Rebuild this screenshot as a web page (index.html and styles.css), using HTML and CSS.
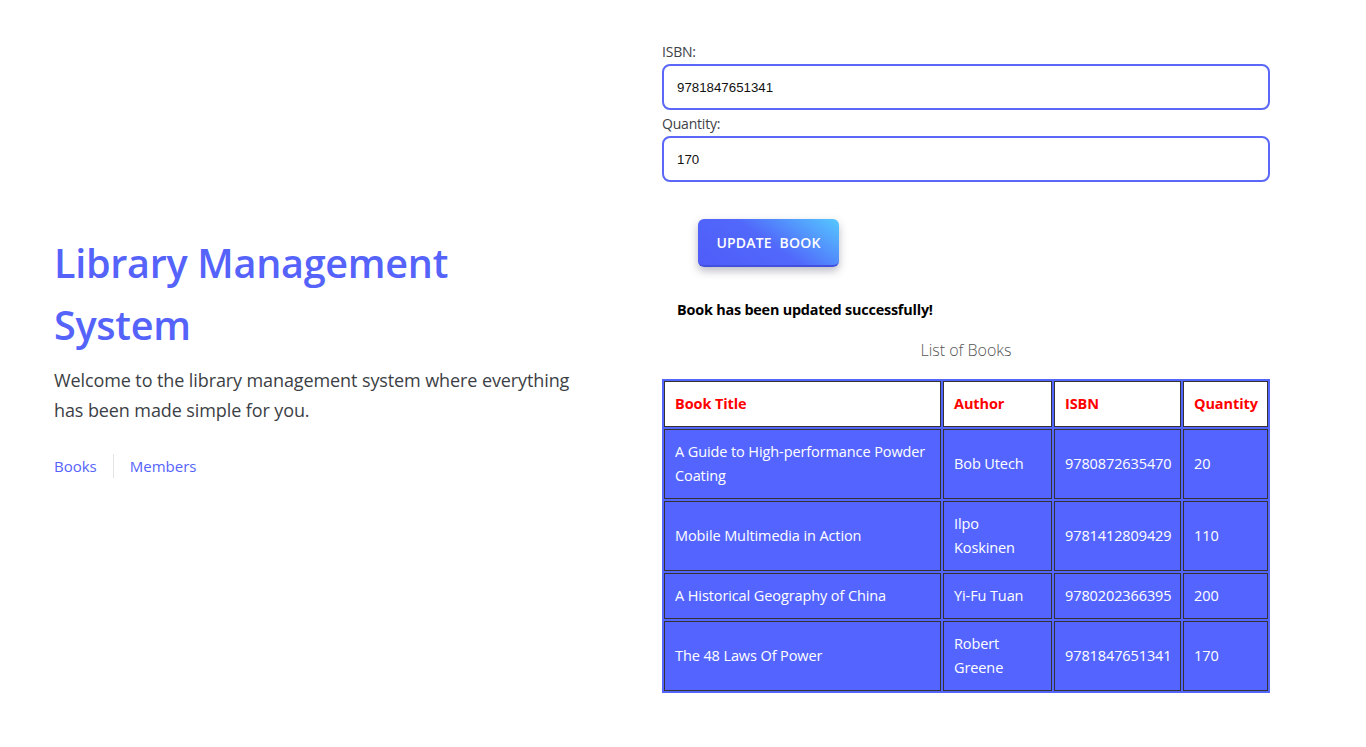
FILE: index.html
```html
<!DOCTYPE html>
<html lang="en">
<head>
<meta charset="utf-8">
<title>Library Management System</title>
<link rel="stylesheet" href="styles.css">
</head>
<body>
<main class="page">
  <section class="intro">
    <h1 class="title">Library Management System</h1>
    <p class="lead">Welcome to the library management system where everything has been made simple for you.</p>
    <nav class="links">
      <a href="#" class="link">Books</a>
      <span class="sep"></span>
      <a href="#" class="link">Members</a>
    </nav>
  </section>
  <section class="panel">
    <form class="form">
      <label class="label" for="isbn">ISBN:</label>
      <input class="input" id="isbn" type="text" value="9781847651341">
      <label class="label" for="qty">Quantity:</label>
      <input class="input" id="qty" type="text" value="170">
      <button type="button" class="btn">Update&nbsp; Book</button>
    </form>
    <p class="msg">Book has been updated successfully!</p>
    <h2 class="list-title">List of Books</h2>
    <table class="books">
      <thead>
        <tr>
          <th class="c1">Book Title</th>
          <th class="c2">Author</th>
          <th class="c3">ISBN</th>
          <th class="c4">Quantity</th>
        </tr>
      </thead>
      <tbody>
        <tr><td>A Guide to High-performance Powder Coating</td><td>Bob Utech</td><td>9780872635470</td><td>20</td></tr>
        <tr><td>Mobile Multimedia in Action</td><td>Ilpo Koskinen</td><td>9781412809429</td><td>110</td></tr>
        <tr><td>A Historical Geography of China</td><td>Yi-Fu Tuan</td><td>9780202366395</td><td>200</td></tr>
        <tr><td>The 48 Laws Of Power</td><td>Robert Greene</td><td>9781847651341</td><td>170</td></tr>
      </tbody>
    </table>
  </section>
</main>
</body>
</html>
```

FILE: styles.css
```css
* { box-sizing: border-box; }
html, body { margin: 0; padding: 0; background: #fff; }
body {
  font-family: "Open Sans", "Noto Sans", "Liberation Sans", sans-serif;
  color: #333;
}
.page {
  display: grid;
  grid-template-columns: 608px 608px;
  padding-left: 54px;
  align-items: start;
}
.intro {
  padding-top: 232px;
  padding-right: 68px;
}
.title {
  margin: 0;
  font-size: 39.6px;
  line-height: 62px;
  font-weight: 600;
  color: #5563fb;
  letter-spacing: -0.3px;
}
.lead {
  margin: 9px 0 0;
  font-size: 18px;
  line-height: 30px;
  color: #3c3f45;
  letter-spacing: -0.1px;
}
.links {
  margin-top: 29px;
  display: flex;
  align-items: center;
}
.link {
  font-size: 15px;
  line-height: 24px;
  color: #5563fb;
  text-decoration: none;
}
.sep {
  width: 1px;
  height: 24px;
  background: #e4e4e8;
  margin: 0 16px;
}
.panel {
  padding-top: 42px;
}
.form {
  display: flex;
  flex-direction: column;
  align-items: flex-start;
}
.label {
  font-size: 14px;
  line-height: 20px;
  color: #3e4148;
  margin-bottom: 2px;
  letter-spacing: -0.2px;
}
.input {
  width: 608px;
  height: 46px;
  border: 2px solid #5a67f7;
  border-radius: 8px;
  padding: 0 13px;
  font-family: "Liberation Sans", Arial, sans-serif;
  font-size: 13.3px;
  color: #111;
  margin-bottom: 4px;
  outline: none;
}
.btn {
  margin: 33px 0 0 36px;
  width: 141px;
  height: 48px;
  border: none;
  border-bottom: 2px solid #434fdd;
  border-radius: 6px;
  background: linear-gradient(35deg, #4f5cf9 0%, #5168fb 50%, #55c8ff 100%);
  color: #fff;
  font-family: "Open Sans", "Noto Sans", sans-serif;
  font-weight: 600;
  font-size: 14px;
  text-transform: uppercase;
  letter-spacing: 0.2px;
  box-shadow: 0 4px 8px rgba(60, 60, 90, 0.35);
  cursor: pointer;
}
.msg {
  margin: 33px 0 0;
  padding-left: 15px;
  font-size: 14.4px;
  line-height: 20px;
  font-weight: 700;
  color: #000;
  letter-spacing: -0.2px;
}
.list-title {
  margin: 18px 0 0;
  text-align: center;
  font-size: 16px;
  line-height: 24px;
  font-weight: 300;
  color: #555;
}
.books {
  margin-top: 17px;
  width: 608px;
  table-layout: fixed;
  border-collapse: separate;
  border-spacing: 2px;
  background: #5465fb;
  border: 0;
}
.books th, .books td {
  border: 1px solid #333;
  padding: 10px 11px 10px 10px;
  text-align: left;
  font-size: 14.5px;
  line-height: 24px;
  vertical-align: middle;
  letter-spacing: -0.1px;
}
.books th {
  background: #fff;
  color: #f00;
  font-weight: 700;
}
.books td {
  background: #5465ff;
  color: #fff;
  font-weight: 400;
}
.c1 { width: 277px; }
.c2 { width: 109px; }
.c3 { width: 127px; }
.c4 { width: 85px; }
```
